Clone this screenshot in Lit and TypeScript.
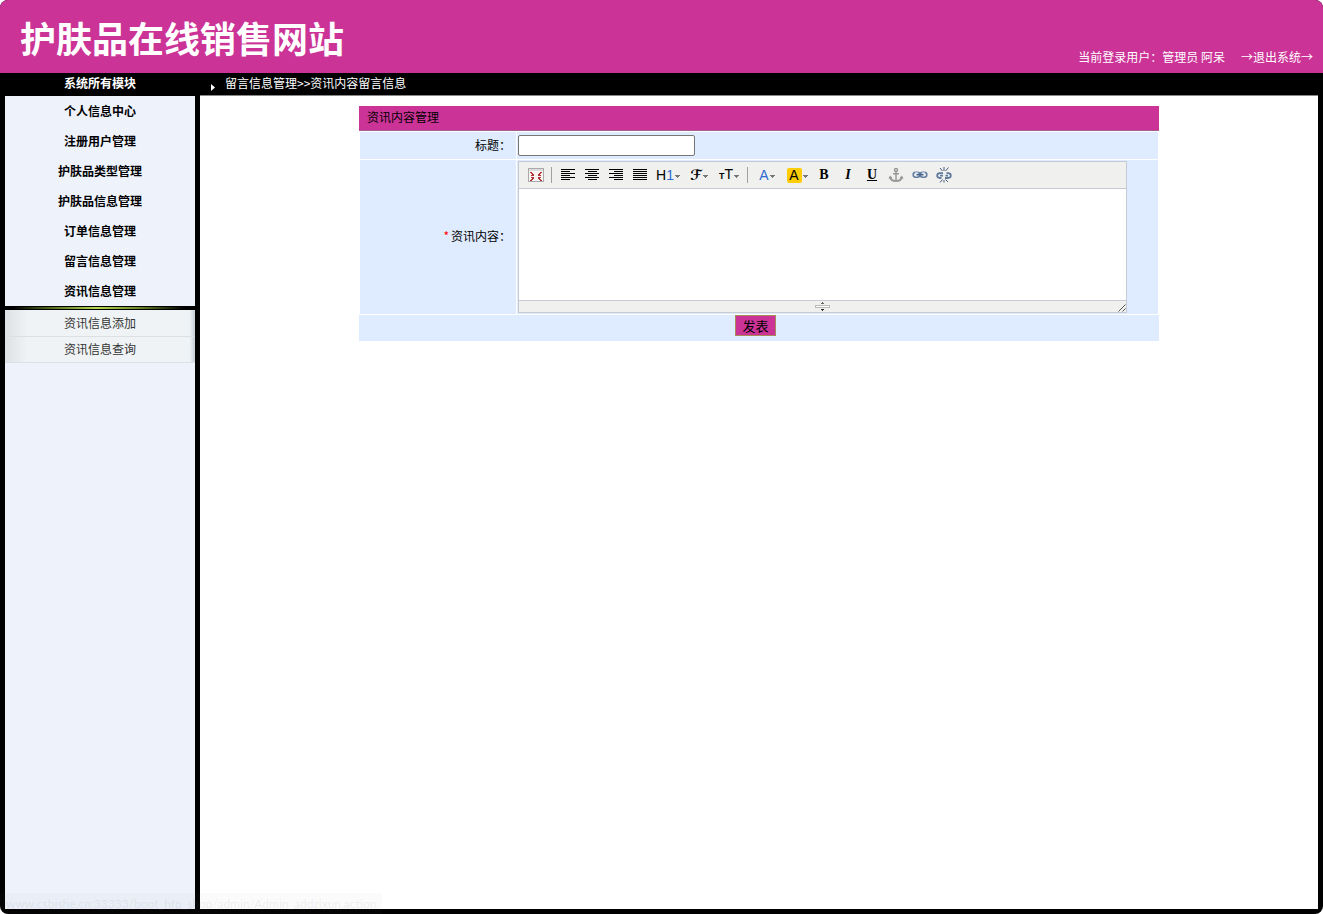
import { LitElement, html, svg, css, TemplateResult } from "lit";
import { customElement, property } from "lit/decorators.js";

const arrow = svg`<path d="M0 6h5v1h-1v1h-1v1h-1v-1h-1v-1h-1z" fill="#777" />`;

const lines = (rows: number[][]) => html`<svg width="16" height="16" viewBox="0 0 16 16" shape-rendering="crispEdges" aria-hidden="true">
  ${rows.map(([x, w], i) => svg`<rect x=${x} y=${2 + i * 2} width=${w} height="1" fill="#000" />`)}
</svg>`;

const fullscreenIcon = html`<svg width="16" height="16" viewBox="0 0 16 16" shape-rendering="crispEdges" aria-hidden="true">
  <rect x="0.5" y="1.5" width="15" height="13" rx="1" fill="#f8f4f4" stroke="#aaa" />
  <path d="M1 2h14v2H1z" fill="#dcdcdc" />
  <path d="M2 5h2v1h1v1h1v2H3V8h1V7H3V6H2zM14 5h-2v1h-1v1h-1v2h3V8h-1V7h1V6h1zM2 14h2v-1h1v-1h1v-2H3v1h1v1H3v1H2zM14 14h-2v-1h-1v-1h-1v-2h3v1h-1v1h1v1h1z" fill="#b03434" />
</svg>`;

const anchorIcon = html`<svg width="16" height="16" viewBox="0 0 16 16" fill="none" stroke="#999" stroke-width="1.5" aria-hidden="true">
  <circle cx="8" cy="3" r="1.5" />
  <path d="M8 4.5V14M5 6.7h6" />
  <path d="M2.2 10c.4 2.4 3 4 5.8 4s5.4-1.6 5.8-4" stroke-width="2" />
  <path d="M0.6 12l1.2-3.4L4.6 11zM15.4 12l-1.2-3.4L11.400 11z" fill="#999" stroke="none" />
</svg>`;

const linkIcon = html`<svg width="16" height="16" viewBox="0 0 16 16" fill="none" aria-hidden="true">
  <rect x="1.2" y="5.2" width="6.6" height="5" rx="2.5" stroke="#637da0" stroke-width="1.6" />
  <rect x="8.2" y="5.2" width="6.6" height="5" rx="2.5" stroke="#637da0" stroke-width="1.6" />
  <path d="M4.5 7.7h7" stroke="#48668f" stroke-width="1.6" />
  <path d="M3 5.5h3M10 5.5h3" stroke="#b5c4d8" />
</svg>`;

const unlinkIcon = html`<svg width="16" height="16" viewBox="0 0 16 16" fill="none" aria-hidden="true">
  <path d="M7 6.2H4C2.200 6.200 1.200 7.200 1.200 8.600S2.200 11 4 11h1.500M4 8.700h3M9 11h3c1.800 0 2.800-1 2.800-2.400S13.800 6.200 12 6.200h-1.500M12 8.700H9.500" stroke="#607a9e" stroke-width="1.8" />
  <path d="M8 0v4M4 1l2.500 3M12.500 0.500L9.500 4M6.500 12.500l-2.500 3M8 13v2.500M9.500 12.500l2.500 2.500" stroke="#4a5f80" />
</svg>`;

interface Tool {
  label: string;
  face: TemplateResult;
  kind?: string;
  menu?: boolean;
}

const toolGroups: Tool[][] = [
  [{ label: "全屏显示", face: fullscreenIcon }],
  [
    { label: "左对齐", face: lines([[1, 14], [1, 9], [1, 14], [1, 9], [1, 14], [1, 9]]) },
    { label: "居中", face: lines([[1, 14], [4, 9], [1, 14], [4, 9], [1, 14], [4, 9]]) },
    { label: "右对齐", face: lines([[1, 14], [6, 9], [1, 14], [6, 9], [1, 14], [6, 9]]) },
    { label: "两端对齐", face: lines([[1, 14], [1, 14], [1, 14], [1, 14], [1, 14], [1, 14]]) },
    { label: "段落", face: html`<span>H<span class="blue">1</span></span>`, kind: "heading", menu: true },
    { label: "字体", face: html`<span>ℱ</span>`, kind: "script", menu: true },
    { label: "文字大小", face: html`<span><span class="small">T</span>T</span>`, kind: "size", menu: true },
  ],
  [
    { label: "文字颜色", face: html`<span class="blue">A</span>`, kind: "color", menu: true },
    { label: "文字背景", face: html`<span class="mark">A</span>`, kind: "color", menu: true },
    { label: "粗体", face: html`<span>B</span>`, kind: "bold" },
    { label: "斜体", face: html`<span>I</span>`, kind: "bold italic" },
    { label: "下划线", face: html`<span>U</span>`, kind: "bold under" },
    { label: "锚点", face: anchorIcon },
    { label: "超级链接", face: linkIcon },
    { label: "取消超级链接", face: unlinkIcon },
  ],
];

@customElement("rich-editor")
class RichEditor extends LitElement {
  @property() label = "";

  static styles = css`
    :host { display: block; border: 1px solid #c5cad3; background: #fff; }
    .toolbar { display: flex; align-items: center; flex-wrap: wrap; min-height: 26px; padding-left: 5px; background: #f0f0ee; border-bottom: 1px solid #c5cad3; }
    .group { display: flex; align-items: center; }
    .group + .group::before { content: ""; width: 1px; height: 16px; margin: 0 4px 0 3px; background: #a0a0a0; }
    button { display: flex; align-items: center; justify-content: center; width: 24px; height: 24px; padding: 0; border: 0; background: none; color: #000; font: 14px/16px "Liberation Sans", Arial, sans-serif; }
    .menu { gap: 1px; width: 30px; }
    .heading { width: 32px; }
    .script { font-family: "DejaVu Sans", sans-serif; font-weight: 700; }
    .small { font-size: 9px; font-weight: 700; }
    .blue { color: #2e6bd0; }
    .mark { width: 15px; height: 15px; line-height: 15px; background: #ffcc05; border-radius: 2px; text-align: center; }
    .bold { font-family: "Liberation Serif", "Times New Roman", serif; font-weight: 700; }
    .italic { font-style: italic; }
    .under { text-decoration: underline; }
    textarea { display: block; box-sizing: border-box; width: 100%; height: 111px; padding: 4px; border: 0; outline: 0; resize: none; font: 12px/18px "Noto Sans CJK SC", sans-serif; }
    .status { display: grid; grid-template-columns: 16px 1fr 16px; align-items: end; justify-items: center; height: 11px; background: #f0f0ee; border-top: 1px solid #c5cad3; }
    .status svg { display: block; }
    .grip { grid-column: 2; }
    .corner { justify-self: end; }
  `;

  render() {
    return html`
      <div class="toolbar" role="toolbar" aria-label="编辑工具">
        ${toolGroups.map(group => html`<div class="group">
          ${group.map(t => html`<button type="button" class="${t.menu ? "menu " : ""}${t.kind ?? ""}" title=${t.label} aria-label=${t.label}>
            ${t.face}${t.menu ? html`<svg width="5" height="12" viewBox="0 0 5 12" shape-rendering="crispEdges" aria-hidden="true">${arrow}</svg>` : ""}
          </button>`)}
        </div>`)}
      </div>
      <textarea aria-label=${this.label}></textarea>
      <div class="status">
        <svg class="grip" width="15" height="11" viewBox="0 0 15 11" shape-rendering="crispEdges" aria-hidden="true">
          <path d="M7 1h1v1h1v1H6V2h1z" fill="#666" />
          <rect x="0.5" y="4.5" width="14" height="2" fill="#fff" stroke="#bbb" />
          <path d="M6 8h3v1H8v1H7V9H6z" fill="#333" />
        </svg>
        <svg class="corner" width="8" height="8" viewBox="0 0 8 8" stroke="#555" aria-hidden="true">
          <path d="M0.5 7.5l7-7M4.5 7.5l3-3" />
        </svg>
      </div>
    `;
  }
}

@customElement("app-root")
class AppRoot extends LitElement {
  private modules = ["个人信息中心", "注册用户管理", "护肤品类型管理", "护肤品信息管理", "订单信息管理", "留言信息管理", "资讯信息管理"];
  private actions = ["资讯信息添加", "资讯信息查询"];

  static styles = css`
    :host { display: flex; flex-direction: column; position: relative; min-height: 100vh; overflow: hidden; border-radius: 8px; background: #000; color: #000; font: 12px/18px "Noto Sans CJK SC", "Noto Sans", sans-serif; }
    a { color: inherit; text-decoration: none; }
    h1, h2, ul { margin: 0; padding: 0; font-size: inherit; list-style: none; }
    .banner { display: flex; justify-content: space-between; align-items: flex-end; box-sizing: border-box; height: 73px; padding: 0 10px 7px 20px; background: #cb3397; color: #fff; }
    .banner h1 { font-size: 36px; line-height: 58px; }
    .session { display: flex; gap: 16px; }
    .body { flex: 1; display: grid; grid-template-columns: 190px minmax(0, 1fr); column-gap: 5px; padding: 0 5px 5px; }
    .side, .work { display: flex; flex-direction: column; }
    .side h2 { height: 23px; line-height: 20px; text-align: center; color: #fff; }
    .nav { flex: 1; background: #edf2fb; text-align: center; }
    .modules a { display: block; line-height: 30px; font-weight: 700; }
    .divider { height: 4px; background: linear-gradient(90deg, #000 4%, #48601a 22%, #b4dc50 48%, #6c8a28 70%, #000 94%) 0 1px / 100% 2px no-repeat #000; }
    .actions { padding-top: 1px; background: linear-gradient(90deg, #dee1e4, #eff3f6 12%, #eff3f6 97%, #c5cfd6); }
    .actions a { display: block; height: 25px; line-height: 24px; border-bottom: 1px solid #dcdfe3; color: #333; }
    .crumb { display: flex; align-items: center; gap: 10px; height: 20px; padding: 0 0 2px 11px; color: #fff; }
    .crumb svg { align-self: flex-end; padding-bottom: 2px; }
    .content { flex: 1; padding: 10px; background: #fff; border-top: 1px solid #888; }
    .panel { max-width: 800px; margin: 0 auto; }
    .panel h2 { height: 24px; padding-left: 8px; line-height: 22px; font-weight: 400; background: #cb3397; border-bottom: 1px solid #a06090; }
    .fields { display: grid; grid-template-columns: 156px minmax(0, 1fr); gap: 1px; padding: 1px; }
    .name, .value { display: flex; align-items: center; background: #dfecff; }
    .name { justify-content: flex-end; gap: 2px; padding: 0 5px 2px 0; }
    .value { padding: 1px; min-height: 25px; }
    .must { color: #f00; }
    .title { box-sizing: border-box; width: 177px; height: 21px; padding: 1px 2px; border: 1px solid #767676; border-radius: 2px; background: #fff; font: 13px/16px "Liberation Sans", sans-serif; }
    rich-editor { width: 607px; max-width: 100%; }
    .submit { display: flex; justify-content: center; align-items: flex-start; height: 26px; padding-right: 7px; background: #dfecff; }
    .submit button { height: 21px; padding: 1px 6px 0; border: 1px solid #a8895a; background: #cb3397; color: #000; font: 13px/18px "Noto Sans CJK SC", sans-serif; }
    .hint { position: absolute; left: 0; bottom: 0; height: 21px; padding: 0 6px; background: rgba(128, 128, 128, 0.03); color: rgba(128, 128, 128, 0.13); font: 12px/22px Lato, sans-serif; pointer-events: none; }
  `;

  render() {
    return html`
      <header class="banner">
        <h1>护肤品在线销售网站</h1>
        <div class="session"><span>当前登录用户：管理员 阿呆</span><a href="#">→退出系统→</a></div>
      </header>
      <div class="body">
        <aside class="side">
          <h2>系统所有模块</h2>
          <nav class="nav">
            <ul class="modules">${this.modules.map(m => html`<li><a href="#">${m}</a></li>`)}</ul>
            <div class="divider"></div>
            <ul class="actions">${this.actions.map(a => html`<li><a href="#">${a}</a></li>`)}</ul>
          </nav>
        </aside>
        <main class="work">
          <div class="crumb">
            <svg width="4" height="7" viewBox="0 0 4 7" aria-hidden="true"><path d="M0 0l4 3.5L0 7z" fill="#fff" /></svg>
            <span>留言信息管理&gt;&gt;资讯内容留言信息</span>
          </div>
          <div class="content">
            <form class="panel" @submit=${(e: Event) => e.preventDefault()}>
              <h2>资讯内容管理</h2>
              <div class="fields">
                <label class="name" for="title">标题：</label>
                <div class="value"><input class="title" id="title" type="text" /></div>
                <div class="name"><span class="must">*</span><span>资讯内容：</span></div>
                <div class="value"><rich-editor label="资讯内容"></rich-editor></div>
              </div>
              <div class="submit"><button type="submit">发表</button></div>
            </form>
          </div>
        </main>
      </div>
      <div class="hint">www.csbishe.cn:33333/boot_hfp_shop/admin/Admin_addzixun.action</div>
    `;
  }
}
